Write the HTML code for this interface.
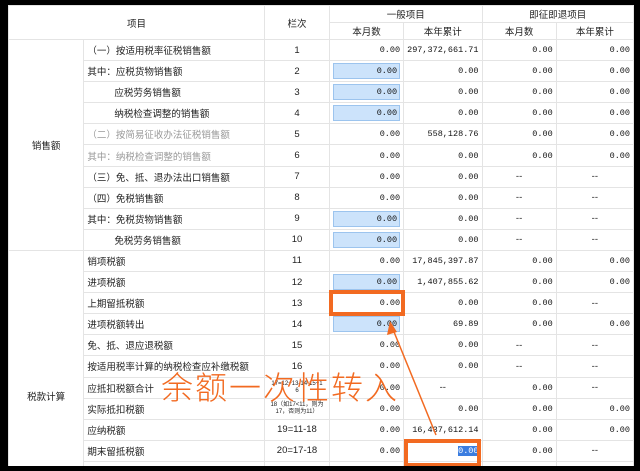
<!DOCTYPE html>
<html><head><meta charset="utf-8"><style>
html,body{margin:0;padding:0;background:#000;width:640px;height:471px;overflow:hidden}
#w{position:absolute;left:8px;top:5px;width:626px;height:461px;background:#fff;overflow:hidden}
table{border-collapse:collapse;table-layout:fixed;position:absolute;left:0;top:0;font-family:"Liberation Sans","Noto Sans CJK SC",sans-serif;font-size:9.5px;color:#222}
td{border:1px solid #e4e4e4;padding:0 3px;height:20.1px;white-space:nowrap;overflow:hidden}
.h td{text-align:center;height:16px}
.c{text-align:center}
.n{text-align:right;font-family:"Liberation Mono","Noto Sans CJK SC",monospace;font-size:8.5px;color:#111}
.g{color:#999}
.in span{display:block;background:#cce3fb;border:1px solid #9cc4ee;height:14px;line-height:15px;padding-right:2px}
.sm{font-size:6px;line-height:7px}
.ob{position:absolute;border:4px solid #f26a21;box-sizing:border-box}
</style></head><body><div id="w">
<table>
<colgroup><col style="width:76px"><col style="width:181px"><col style="width:65px"><col style="width:75px"><col style="width:76px"><col style="width:75px"><col style="width:78px"></colgroup>
<tr class="h"><td colspan="2" rowspan="2">项目</td><td rowspan="2">栏次</td><td colspan="2">一般项目</td><td colspan="2">即征即退项目</td></tr>
<tr class="h"><td>本月数</td><td>本年累计</td><td>本月数</td><td>本年累计</td></tr>
<tr><td rowspan="10" class="c">销售额</td><td>（一）按适用税率征税销售额</td><td class="c">1</td><td class="n">0.00</td><td class="n">297,372,661.71</td><td class="n">0.00</td><td class="n">0.00</td></tr>
<tr><td>其中：应税货物销售额</td><td class="c">2</td><td class="n in"><span>0.00</span></td><td class="n">0.00</td><td class="n">0.00</td><td class="n">0.00</td></tr>
<tr><td style="padding-left:30px">应税劳务销售额</td><td class="c">3</td><td class="n in"><span>0.00</span></td><td class="n">0.00</td><td class="n">0.00</td><td class="n">0.00</td></tr>
<tr><td style="padding-left:30px">纳税检查调整的销售额</td><td class="c">4</td><td class="n in"><span>0.00</span></td><td class="n">0.00</td><td class="n">0.00</td><td class="n">0.00</td></tr>
<tr><td class="g">（二）按简易征收办法征税销售额</td><td class="c">5</td><td class="n">0.00</td><td class="n">558,128.76</td><td class="n">0.00</td><td class="n">0.00</td></tr>
<tr><td class="g">其中：纳税检查调整的销售额</td><td class="c">6</td><td class="n">0.00</td><td class="n">0.00</td><td class="n">0.00</td><td class="n">0.00</td></tr>
<tr><td>（三）免、抵、退办法出口销售额</td><td class="c">7</td><td class="n">0.00</td><td class="n">0.00</td><td class="c">--</td><td class="c">--</td></tr>
<tr><td>（四）免税销售额</td><td class="c">8</td><td class="n">0.00</td><td class="n">0.00</td><td class="c">--</td><td class="c">--</td></tr>
<tr><td>其中：免税货物销售额</td><td class="c">9</td><td class="n in"><span>0.00</span></td><td class="n">0.00</td><td class="c">--</td><td class="c">--</td></tr>
<tr><td style="padding-left:30px">免税劳务销售额</td><td class="c">10</td><td class="n in"><span>0.00</span></td><td class="n">0.00</td><td class="c">--</td><td class="c">--</td></tr>
<tr><td rowspan="11" class="c" style="padding-top:60px">税款计算</td><td>销项税额</td><td class="c">11</td><td class="n">0.00</td><td class="n">17,845,397.87</td><td class="n">0.00</td><td class="n">0.00</td></tr>
<tr><td>进项税额</td><td class="c">12</td><td class="n in"><span>0.00</span></td><td class="n">1,407,855.62</td><td class="n">0.00</td><td class="n">0.00</td></tr>
<tr><td>上期留抵税额</td><td class="c">13</td><td class="n">0.00</td><td class="n">0.00</td><td class="n">0.00</td><td class="c">--</td></tr>
<tr><td>进项税额转出</td><td class="c">14</td><td class="n in"><span>0.00</span></td><td class="n">69.89</td><td class="n">0.00</td><td class="n">0.00</td></tr>
<tr><td>免、抵、退应退税额</td><td class="c">15</td><td class="n">0.00</td><td class="n">0.00</td><td class="c">--</td><td class="c">--</td></tr>
<tr><td>按适用税率计算的纳税检查应补缴税额</td><td class="c">16</td><td class="n">0.00</td><td class="n">0.00</td><td class="c">--</td><td class="c">--</td></tr>
<tr><td>应抵扣税额合计</td><td class="c sm">17=12+13-14-15+1<br>6</td><td class="n">0.00</td><td class="c">--</td><td class="n">0.00</td><td class="c">--</td></tr>
<tr><td>实际抵扣税额</td><td class="c sm">18（如17&lt;11，则为<br>17，否则为11）</td><td class="n">0.00</td><td class="n">0.00</td><td class="n">0.00</td><td class="n">0.00</td></tr>
<tr><td>应纳税额</td><td class="c">19=11-18</td><td class="n">0.00</td><td class="n">16,437,612.14</td><td class="n">0.00</td><td class="n">0.00</td></tr>
<tr><td>期末留抵税额</td><td class="c">20=17-18</td><td class="n">0.00</td><td class="n"><span style="background:#3b7de0;color:#fff">0.00</span></td><td class="n">0.00</td><td class="c">--</td></tr>
<tr><td></td><td></td><td></td><td></td><td></td><td></td></tr>
</table>
<div class="ob" style="left:321px;top:285px;width:76px;height:26px"></div>
<div class="ob" style="left:396px;top:434px;width:77px;height:28px"></div>
<div style="position:absolute;left:153px;top:363px;font-family:'Noto Sans CJK SC',sans-serif;font-weight:300;font-size:32px;letter-spacing:2px;color:#f26a21;line-height:36px">余额一次性转入</div>
<svg style="position:absolute;left:0;top:0" width="626" height="461"><line x1="428" y1="430" x2="384" y2="322" stroke="#f26a21" stroke-width="1.5"/><path d="M382,316 L379,330 L389,327 Z" fill="#f26a21"/></svg>
</div></body></html>
